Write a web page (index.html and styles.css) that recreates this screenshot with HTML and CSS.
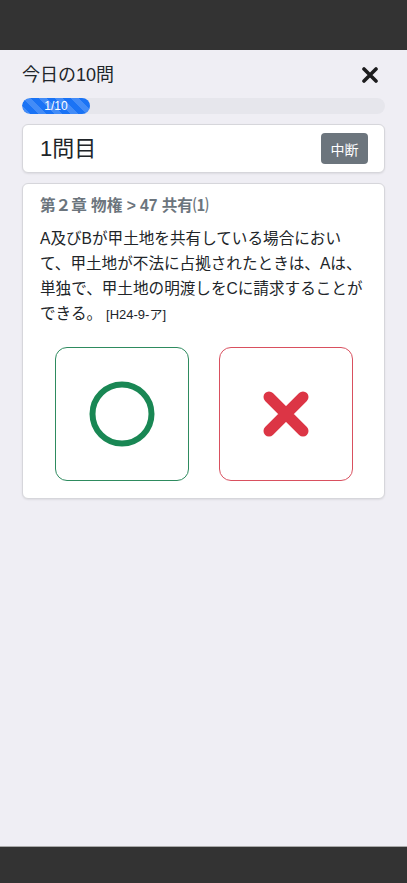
FILE: index.html
```html
<!DOCTYPE html>
<html lang="ja">
<head>
<meta charset="utf-8">
<title>今日の10問</title>
<link rel="stylesheet" href="styles.css">
</head>
<body>
<div class="page">
  <div class="topbar"></div>
  <main class="main">
    <div class="header">
      <h1 class="title">今日の10問</h1>
      <button class="close" aria-label="閉じる">
        <svg width="16" height="16" viewBox="0 0 16 16"><path d="M2 2L14 14M14 2L2 14" stroke="#1c1c1e" stroke-width="3.6" stroke-linecap="round"/></svg>
      </button>
    </div>
    <div class="progress">
      <div class="progress-fill" style="width:68px">1/10</div>
    </div>
    <div class="card qhead">
      <div class="qnum">1問目</div>
      <button class="stop">中断</button>
    </div>
    <div class="card qbody">
      <div class="chapter">第２章 物権 &gt; 47 共有⑴</div>
      <p class="question"><span>A及びBが甲土地を共有している場合において、甲土地が不法に占拠されたときは、Aは、単独で、甲土地の明渡しをCに請求することが</span><span>できる。</span><span class="ref">[H24-9-ア]</span></p>
      <div class="answers">
        <button class="ans ans-o" aria-label="○">
          <svg width="70" height="70" viewBox="0 0 70 70"><circle cx="35" cy="35" r="29.5" fill="none" stroke="#198754" stroke-width="6"/></svg>
        </button>
        <button class="ans ans-x" aria-label="×">
          <svg width="50" height="50" viewBox="0 0 50 50"><path d="M8 8L42 42M42 8L8 42" stroke="#dc3545" stroke-width="11" stroke-linecap="round"/></svg>
        </button>
      </div>
    </div>
  </main>
  <div class="bottombar"></div>
</div>
</body>
</html>
```
FILE: styles.css
```css
* { box-sizing: border-box; }
html, body { margin: 0; padding: 0; }
body {
  font-family: "Liberation Sans", "Noto Sans CJK JP", sans-serif;
  background: #efeef4;
  color: #212529;
}
.page {
  height: 883px;
  display: flex;
  flex-direction: column;
}
.topbar {
  height: 50px;
  background: #333333;
  flex: none;
}
.main {
  flex: 1;
  padding: 14px 22px 0 22px;
}
.header {
  display: flex;
  justify-content: space-between;
  align-items: center;
  height: 22px;
}
.title {
  margin: 0;
  font-size: 18px;
  font-weight: 400;
  line-height: 22px;
  color: #212529;
}
.close {
  border: 0;
  background: none;
  padding: 0;
  width: 16px;
  height: 16px;
  margin-right: 7px;
  display: flex;
}
.progress {
  margin-top: 12px;
  height: 16px;
  border-radius: 8px;
  background: #e6e6ec;
  overflow: hidden;
}
.progress-fill {
  height: 16px;
  border-radius: 8px;
  background-color: #1a73f5;
  background-image: linear-gradient(45deg, rgba(255,255,255,.18) 25%, transparent 25%, transparent 50%, rgba(255,255,255,.18) 50%, rgba(255,255,255,.18) 75%, transparent 75%, transparent);
  background-size: 16px 16px;
  color: #fff;
  font-size: 12px;
  line-height: 16px;
  text-align: center;
}
.card {
  background: #fff;
  border: 1px solid #d6d6db;
  border-radius: 6px;
  box-shadow: 0 1px 2px rgba(0,0,0,.08);
}
.qhead {
  margin-top: 10px;
  display: flex;
  justify-content: space-between;
  align-items: center;
  padding: 8px 16px 8px 17px;
}
.qnum {
  font-size: 22px;
  line-height: 31px;
  color: #212529;
}
.stop {
  width: 47px;
  height: 31px;
  border: 0;
  border-radius: 4px;
  background: #6c757d;
  color: #fff;
  font-family: inherit;
  font-size: 14px;
  padding: 0;
}
.qbody {
  margin-top: 10px;
  padding: 11px 17px 17px 17px;
}
.chapter {
  font-size: 15.6px;
  font-weight: 700;
  line-height: 22px;
  color: #6c757d;
}
.question {
  margin: 8.5px 0 0 0;
  font-size: 15.6px;
  line-height: 25px;
  color: #212529;
}
.ref {
  font-size: 13px;
  margin-left: 4px;
}
.answers {
  margin-top: 20.5px;
  display: flex;
  justify-content: center;
  gap: 30px;
}
.ans {
  width: 134px;
  height: 134px;
  background: #fff;
  border-radius: 12px;
  padding: 0;
  display: flex;
  align-items: center;
  justify-content: center;
}
.ans-o { border: 1px solid #2e8b5f; }
.ans-x { border: 1px solid #d9505f; }
.bottombar {
  flex: none;
  height: 37px;
  background: #333333;
  border-top: 1px solid #a9a9a9;
}
```
